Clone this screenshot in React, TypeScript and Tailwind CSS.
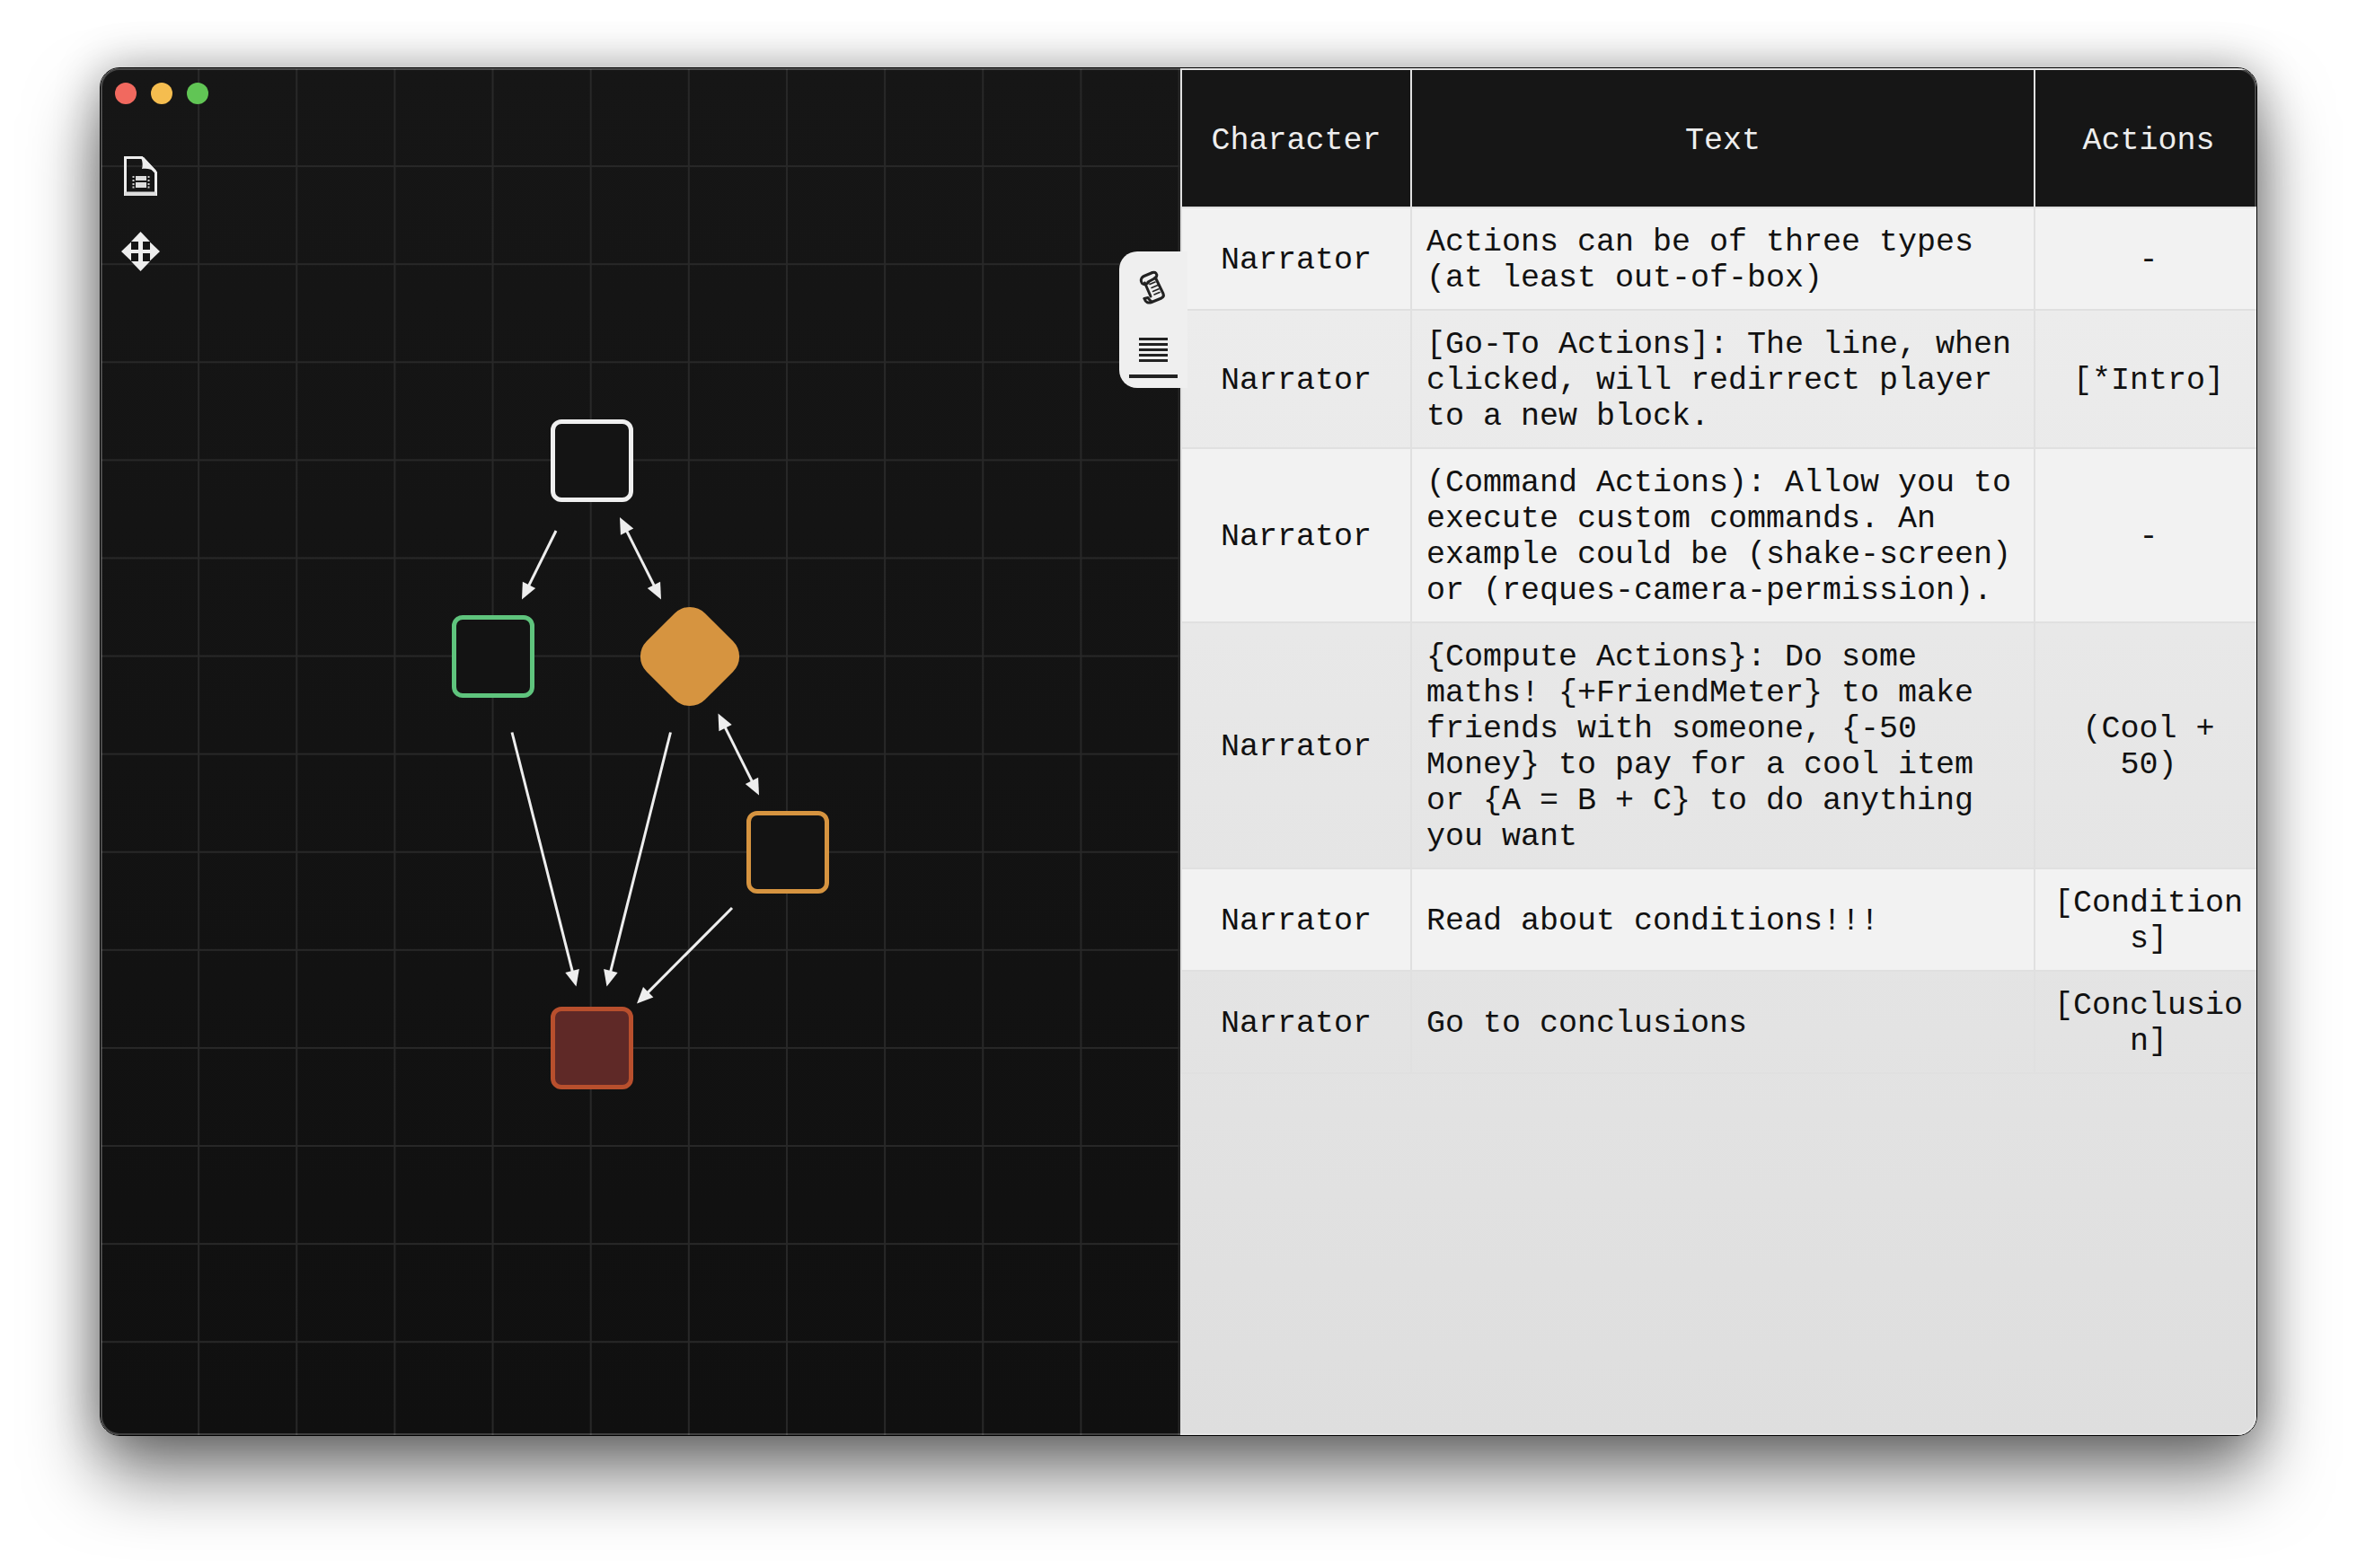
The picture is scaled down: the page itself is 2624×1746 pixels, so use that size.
const rows = [
  { text: 'Actions can be of three types (at least out-of-box)', action: '-', odd: true },
  { text: '[Go-To Actions]: The line, when clicked, will redirrect player to a new block.', action: '[*Intro]', odd: false },
  { text: '(Command Actions): Allow you to execute custom commands. An example could be (shake-screen) or (reques-camera-permission).', action: '-', odd: true },
  { text: '{Compute Actions}: Do some maths! {+FriendMeter} to make friends with someone, {-50 Money} to pay for a cool item or {A = B + C} to do anything you want', action: '(Cool + 50)', odd: false },
  { text: 'Read about conditions!!!', action: '[Conditions]', odd: true },
  { text: 'Go to conclusions', action: '[Conclusion]', odd: false },
];

// arrows in panel coordinates: [x1, y1, x2, y2, double]
const arrows: [number, number, number, number, boolean][] = [
  [507, 515, 469, 591.5, false],
  [578, 500, 624, 591.5, true],
  [687.5, 718.5, 733, 809.5, true],
  [458, 739.5, 529.5, 1022.5, false],
  [634.5, 739.5, 563.5, 1022.5, false],
  [703, 935, 597, 1041.5, false],
];

function head(x1: number, y1: number, x2: number, y2: number) {
  const len = Math.hypot(x2 - x1, y2 - y1);
  const ux = (x2 - x1) / len;
  const uy = (y2 - y1) / len;
  const bx = x2 - ux * 18;
  const by = y2 - uy * 18;
  return `${x2},${y2} ${bx - uy * 8},${by + ux * 8} ${bx + uy * 8},${by - ux * 8}`;
}

function Arrows() {
  return (
    <svg className="absolute inset-0 w-full h-full">
      {arrows.map(([x1, y1, x2, y2, double]) => {
        const len = Math.hypot(x2 - x1, y2 - y1);
        const ux = (x2 - x1) / len;
        const uy = (y2 - y1) / len;
        return (
          <g key={`${x1}-${y1}`} fill="#eeeeee" stroke="none">
            <line
              x1={double ? x1 + ux * 10 : x1}
              y1={double ? y1 + uy * 10 : y1}
              x2={x2 - ux * 10}
              y2={y2 - uy * 10}
              stroke="#eeeeee"
              strokeWidth="3"
            />
            <polygon points={head(x1, y1, x2, y2)} />
            {double && <polygon points={head(x2, y2, x1, y1)} />}
          </g>
        );
      })}
    </svg>
  );
}

function FileIcon() {
  return (
    <svg width="37" height="44" viewBox="0 0 37 44" fill="none">
      <path d="M1.5 1.5H20L35.5 18V42.5H1.5Z" stroke="#eeeeee" strokeWidth="3" />
      <path d="M19 1C21 6 21 11 20 14C25 13 31 14 36 18V16L22 1Z" fill="#eeeeee" />
      <path d="M1 39.5H36V44H1Z" fill="#dddddd" />
      <rect x="13" y="22" width="12" height="5" fill="#dddddd" />
      <rect x="13" y="29" width="12" height="6" fill="#dddddd" />
      <g fill="#cccccc">
        <rect x="9.5" y="22" width="2" height="2" />
        <rect x="9.5" y="26" width="2" height="2" />
        <rect x="9.5" y="30" width="2" height="2" />
        <rect x="9.5" y="33.5" width="2" height="2" />
        <rect x="26.5" y="22" width="2" height="2" />
        <rect x="26.5" y="26" width="2" height="2" />
        <rect x="26.5" y="30" width="2" height="2" />
        <rect x="26.5" y="33.5" width="2" height="2" />
      </g>
    </svg>
  );
}

function MoveIcon() {
  return (
    <svg width="43" height="44" viewBox="0 0 43 44" fill="#eeeeee">
      <path d="M21.5 0L32 11H11Z" />
      <path d="M21.5 44L32 33H11Z" />
      <path d="M0 22L11 11.5V32.5Z" />
      <path d="M43 22L32 11.5V32.5Z" />
      <rect x="19" y="10" width="5" height="24" />
      <rect x="10" y="20" width="23" height="4" />
    </svg>
  );
}

function ScrollIcon() {
  return (
    <svg width="50" height="50" viewBox="0 0 50 50" fill="none" stroke="#222222" strokeWidth="3" strokeLinecap="round" strokeLinejoin="round">
      <path d="M24 8.5L14.5 12.5C11 14 10.5 18 12.5 20.5C14.5 22.5 17.5 22 19.5 19.5" />
      <path d="M24 8.5C27.5 7.5 29.5 10 28.5 13L25.5 15.5L19 19" />
      <path d="M27.5 14.5L36 32C37 34.5 36 36 34 37L23 41.5C19.5 43 16 41.5 15 37.5" />
      <path d="M15 37.5L19 36.5C20 38 21 39.5 23 41" />
      <path d="M15.5 20L22 35" />
      <g strokeWidth="1.6">
        <path d="M21 21.5L27 19" />
        <path d="M23 25.5L29.5 22.8" />
        <path d="M24.5 29.5L31 26.8" />
        <path d="M26 33L32 30.5" />
      </g>
    </svg>
  );
}

export default function App() {
  return (
    <div className="w-full h-[1746px] bg-white pt-[75px] pl-[111px] overflow-hidden font-['Liberation_Mono',monospace]">
      <div className="relative w-[2402px] h-[1524px] border border-black rounded-[22px] shadow-[0_44px_80px_rgba(0,0,0,0.52),0_0_50px_rgba(0,0,0,0.3)]">
        <div className="flex w-full h-full rounded-[21px] overflow-hidden">
          <div className="relative w-[1202px] h-full shrink-0 bg-[linear-gradient(#282828_2px,transparent_2px),linear-gradient(90deg,#282828_2px,transparent_2px),linear-gradient(#161616,#101010)] bg-[size:109.15px_109.1px,109.15px_109.1px,100%_100%] bg-[position:-1px_-1px,-1px_-1px,0_0]">
            <Arrows />
            <div className="absolute left-[501px] top-[391px] w-[92px] h-[92px] rounded-[12px] border-[5px] border-[#efefef] bg-[#141414]" />
            <div className="absolute left-[391px] top-[609px] w-[92px] h-[92px] rounded-[12px] border-[5px] border-[#5fc47d] bg-[#131313]" />
            <div className="absolute left-[609.5px] top-[609px] w-[92px] h-[92px] rounded-[24px] rotate-45 bg-[#d69440]" />
            <div className="absolute left-[719px] top-[827px] w-[92px] h-[92px] rounded-[12px] border-[5px] border-[#d69440] bg-[#131313]" />
            <div className="absolute left-[501px] top-[1045px] w-[92px] h-[92px] rounded-[12px] border-[5px] border-[#b84f2d] bg-[#5f2927]" />

            <div className="relative flex flex-col w-[160px] pt-[16px]">
              <div className="flex gap-[16px] pl-[16px]">
                <div className="w-[24px] h-[24px] shrink-0 rounded-full bg-[#f1695f]" />
                <div className="w-[24px] h-[24px] shrink-0 rounded-full bg-[#f5bd4f]" />
                <div className="w-[24px] h-[24px] shrink-0 rounded-full bg-[#61c555]" />
              </div>
              <div className="flex flex-col items-center gap-[40px] w-[88px] mt-[58px]">
                <FileIcon />
                <MoveIcon />
              </div>
            </div>
          </div>

          <div className="flex-1 h-full bg-[linear-gradient(#efefef,#dedede)]">
            <table className="w-[1198px] table-fixed border-separate border-spacing-0 text-[35px] leading-[40px] text-[#111111]">
              <colgroup>
                <col className="w-[256px]" />
                <col className="w-[694px]" />
                <col className="w-[248px]" />
              </colgroup>
              <thead>
                <tr className="bg-[#161616] text-[#eeeeee]">
                  {['Character', 'Text', 'Actions'].map((label, i) => (
                    <th
                      key={label}
                      className={`h-[156px] pt-[6px] font-normal text-center border-l-2 border-t-2 border-b-2 border-[#e0e0e0] ${i === 2 ? 'pl-[6px]' : ''}`}
                    >
                      {label}
                    </th>
                  ))}
                </tr>
              </thead>
              <tbody>
                {rows.map((row) => (
                  <tr key={row.text} className={row.odd ? 'bg-[#f2f2f2]' : ''}>
                    <td className="px-4 pt-[18px] pb-[14px] text-center border-l-2 border-b-2 border-[#e0e0e0]">Narrator</td>
                    <td className="px-4 pt-[18px] pb-[14px] text-left border-l-2 border-b-2 border-[#e0e0e0]">{row.text}</td>
                    <td className="pl-[19px] pr-[13px] pt-[18px] pb-[14px] text-center break-words border-l-2 border-b-2 border-[#e0e0e0]">{row.action}</td>
                  </tr>
                ))}
              </tbody>
            </table>
          </div>
        </div>

        <div className="absolute left-[1134px] top-[204px] w-[76px] h-[152px] rounded-l-[20px] bg-[#efefef] flex flex-col items-center pt-[15px]">
          <ScrollIcon />
          <div className="flex flex-col gap-[3px] mt-[31px]">
            {[0, 1, 2, 3, 4].map((i) => (
              <div key={i} className="w-[32px] h-[3px] bg-[#222222]" />
            ))}
          </div>
          <div className="w-[54px] h-[4px] mt-[14px] bg-[#222222]" />
        </div>

        <div className="absolute inset-0 rounded-[21px] pointer-events-none shadow-[inset_0_0_0_2px_rgba(255,255,255,0.2)]" />
      </div>
    </div>
  );
}
